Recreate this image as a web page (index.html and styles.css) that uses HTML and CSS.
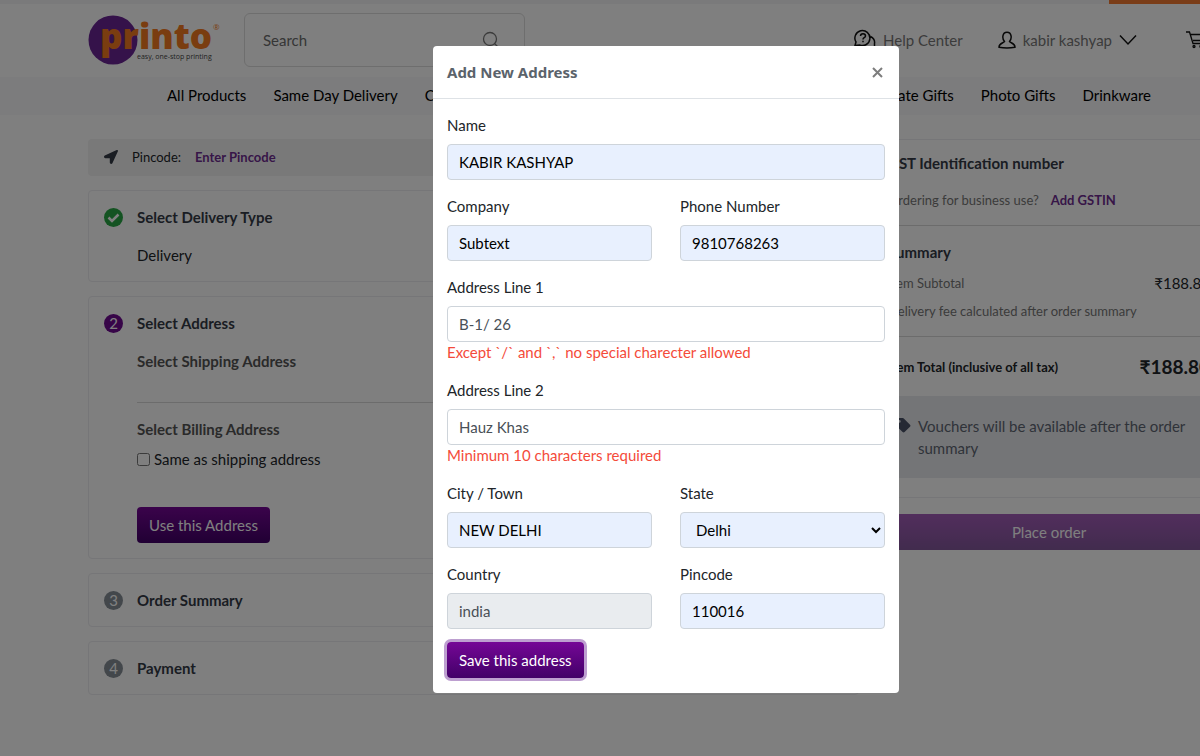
FILE: index.html
```html
<!DOCTYPE html>
<html lang="en">
<head>
  <meta charset="UTF-8" />
  <meta name="viewport" content="width=device-width, initial-scale=1.0"/>
  <title>Checkout - Printo</title>
  <link rel="stylesheet" href="styles.css">
</head>
<body>
<div class="page">
  <div class="top-strip"><span class="top-strip-promo"></span></div>

  <header class="header">
    <a class="logo" href="#" aria-label="Printo">
      <svg width="132" height="50" viewBox="0 0 132 50">
        <circle cx="25" cy="25" r="24.500" fill="#6a2595"/>
        <text class="logo-name" x="12" y="34">printo</text>
        <text class="logo-mark" x="125" y="15">®</text>
        <text class="logo-tag" x="49" y="44">easy, one-stop printing</text>
      </svg>
    </a>
    <form class="search">
      <input type="text" placeholder="Search" aria-label="Search" />
      <button type="button" aria-label="Search">
        <svg width="18" height="18" viewBox="0 0 18 18" fill="none" stroke="#777" stroke-width="1.300"><circle cx="8" cy="8" r="6.500"/><path d="M12.500 12.500l5 5"/></svg>
      </button>
    </form>
    <div class="header-actions">
      <a class="header-link" href="#">
        <svg width="22" height="22" viewBox="0 0 22 22" fill="none" stroke="#111" stroke-width="1.500"><path d="M1 16.500l1-3.500a7.500 7.500 0 1 1 3.500 3l-4.500.500zM16.500 7.500c3 1.500 4.500 4 4 7v4.500H15c-3 0-5-1.500-6-2.500"/><path d="M6.500 7c0-3 5-3 5 0 0 1.700-2.500 1.700-2.500 3.400M9 11.800v1.500"/></svg>
        <span>Help Center</span>
      </a>
      <a class="header-link header-user" href="#">
        <svg width="18" height="18" viewBox="0 0 18 18" fill="none" stroke="#111" stroke-width="1.500"><path d="M6.500 10.500C4 8 4 1.300 9 1.300s5 6.700 2.500 9.200c.5 1.500 5.500 1.500 5.500 5.700-4 .800-12 .800-16 0 0-4.200 5-4.200 5.500-5.700z"/></svg>
        <span>kabir kashyap</span>
        <svg width="18" height="12" viewBox="0 0 18 12" fill="none" stroke="#111" stroke-width="1.500"><path d="M1 1.500l8 8.500 8-8.500"/></svg>
      </a>
      <a class="cart" href="#" aria-label="Cart">
        <svg width="22" height="18" viewBox="0 0 22 18" fill="none" stroke="#111" stroke-width="1.300"><path d="M0 1h3.500l3.500 11.500h11.500L21 3.500H4.500M7 9.500h12"/><circle cx="8" cy="15.500" r="1"/><circle cx="15" cy="15.500" r="1"/></svg>
      </a>
    </div>
  </header>

  <nav class="nav">
    <a href="#">All Products</a>
    <a href="#">Same Day Delivery</a>
    <a href="#">Clothing</a>
    <a href="#" class="nav-end">Corporate Gifts</a>
    <a href="#">Photo Gifts</a>
    <a href="#">Drinkware</a>
  </nav>

  <main class="checkout">
    <div class="steps">
      <div class="pincode-bar">
        <svg width="14" height="14" viewBox="0 0 14 14" fill="#343a46"><path d="M12.700.1L.8 5.600c-1.300.7-.9 2.600.6 2.600h4.400v4.400c0 1.500 2 1.900 2.600.6L13.900 1.300c.4-.8-.4-1.600-1.200-1.200z"/></svg>
        <span>Pincode:</span>
        <a href="#">Enter Pincode</a>
      </div>

      <section class="card step">
        <svg class="step-check" width="19" height="19" viewBox="0 0 19 19"><circle cx="9.500" cy="9.500" r="9.500" fill="#28a745"/><path d="M4.500 9.500l3.500 3.500 6.500-6.500" fill="none" stroke="#fff" stroke-width="2.500"/></svg>
        <div class="step-body">
          <h2>Select Delivery Type</h2>
          <p class="step-value">Delivery</p>
        </div>
      </section>

      <section class="card step step-address">
        <span class="step-number active">2</span>
        <div class="step-body">
          <h2>Select Address</h2>
          <h3>Select Shipping Address</h3>
          <hr>
          <h3>Select Billing Address</h3>
          <div class="same-address">
            <input type="checkbox" id="same-address" />
            <label for="same-address">Same as shipping address</label>
          </div>
          <button class="btn">Use this Address</button>
        </div>
      </section>

      <section class="card step">
        <span class="step-number">3</span>
        <h2>Order Summary</h2>
      </section>

      <section class="card step">
        <span class="step-number">4</span>
        <h2>Payment</h2>
      </section>
    </div>

    <aside class="side">
      <div class="card">
        <div class="side-block">
          <h2>GST Identification number</h2>
          <p class="gst-line"><span>Ordering for business use?</span><a href="#">Add GSTIN</a></p>
        </div>
        <div class="side-block">
          <h2>Summary</h2>
          <div class="side-row"><span>Item Subtotal</span><span class="price">₹188.80</span></div>
          <p class="side-note">Delivery fee calculated after order summary</p>
        </div>
        <div class="side-total"><span>Item Total (inclusive of all tax)</span><span class="total-price">₹188.80</span></div>
        <div class="voucher">
          <svg width="15" height="15" viewBox="0 0 15 15" fill="#4a5268"><path d="M0 1.400v5.500c0 .4.200.8.400 1l6.200 6.200c.6.600 1.500.6 2 0l5.400-5.400c.6-.6.600-1.500 0-2L7.800.500C7.500.200 7.200 0 6.800 0H1.400C.6 0 0 .6 0 1.400zM3.300 2a1.400 1.400 0 1 1 0 2.800 1.400 1.400 0 0 1 0-2.800z"/></svg>
          <p>Vouchers will be available after the order summary</p>
        </div>
      </div>
      <button class="btn place-order">Place order</button>
    </aside>
  </main>

  <div class="backdrop">
    <div class="modal" role="dialog" aria-labelledby="modal-title">
      <div class="modal-header">
        <h1 id="modal-title">Add New Address</h1>
        <button class="close" aria-label="Close">
          <svg width="11" height="11" viewBox="0 0 11 11" stroke="#7d7d7d" stroke-width="2"><path d="M1 1l9 9M10 1l-9 9"/></svg>
        </button>
      </div>
      <form class="modal-body">
        <div class="fields">
          <div class="field wide">
            <label for="name">Name</label>
            <input class="filled" type="text" id="name" value="KABIR KASHYAP" />
          </div>
          <div class="field">
            <label for="company">Company</label>
            <input class="filled" type="text" id="company" value="Subtext" />
          </div>
          <div class="field">
            <label for="phone">Phone Number</label>
            <input class="filled" type="tel" id="phone" value="9810768263" />
          </div>
          <div class="field wide">
            <label for="line1">Address Line 1</label>
            <input type="text" id="line1" value="B-1/ 26" />
            <p class="error">Except `/` and `,` no special charecter allowed</p>
          </div>
          <div class="field wide">
            <label for="line2">Address Line 2</label>
            <input type="text" id="line2" value="Hauz Khas" />
            <p class="error">Minimum 10 characters required</p>
          </div>
          <div class="field">
            <label for="city">City / Town</label>
            <input class="filled" type="text" id="city" value="NEW DELHI" />
          </div>
          <div class="field">
            <label for="state">State</label>
            <select class="filled" id="state"><option>Delhi</option></select>
          </div>
          <div class="field">
            <label for="country">Country</label>
            <input type="text" id="country" value="india" disabled />
          </div>
          <div class="field">
            <label for="pincode">Pincode</label>
            <input class="filled" type="text" id="pincode" value="110016" />
          </div>
        </div>
        <button type="button" class="btn btn-save">Save this address</button>
      </form>
    </div>
  </div>
</div>
</body>
</html>
```
FILE: styles.css
```css
* {
  box-sizing: border-box;
}

body {
  margin: 0;
  overflow: hidden;
  font-family: Lato, "Noto Sans", sans-serif;
  font-size: 15px;
  line-height: 22px;
  color: #212529;
  background: #fff;
}

h1, h2, h3, p {
  margin: 0;
}

a {
  color: inherit;
  text-decoration: none;
}

button, input, select {
  font-family: inherit;
  font-size: 15px;
}

svg {
  display: block;
  flex: none;
}

.page {
  position: relative;
  min-width: 1332px;
  min-height: 100vh;
}

/* header */
.top-strip {
  display: flex;
  justify-content: flex-end;
  height: 4px;
  background: #f4f4f6;
}

.top-strip-promo {
  width: 223px;
  background: #f47b30;
}

.header {
  display: flex;
  align-items: center;
  height: 73px;
  padding: 0 124px 2px 88px;
}

.logo-name {
  font: 800 35px "Open Sans", sans-serif;
  fill: #f47b20;
}

.logo-mark {
  font: 8px "Open Sans", sans-serif;
  fill: #f47b20;
}

.logo-tag {
  font: 7px "Open Sans", sans-serif;
  fill: #444;
}

.search {
  display: flex;
  align-items: center;
  width: 281px;
  height: 54px;
  margin-left: 24px;
  padding: 0 24px 0 18px;
  border: 1px solid #dcdcdc;
  border-radius: 6px;
}

.search input {
  flex: 1;
  min-width: 0;
  padding: 0;
  border: 0;
  outline: 0;
  background: none;
}

.search input::placeholder {
  color: #6c6c6c;
}

.search button, .close {
  padding: 0;
  border: 0;
  background: none;
  cursor: pointer;
}

.header-actions {
  display: flex;
  align-items: center;
  gap: 35px;
  margin-left: auto;
}

.header-link {
  display: flex;
  align-items: center;
  gap: 7px;
  color: #777;
}

.cart {
  margin-left: 14px;
}

.nav {
  display: flex;
  align-items: center;
  gap: 27px;
  height: 38px;
  padding: 0 181px 2px 167px;
  background: #f8f8fa;
  color: #000;
}

.nav-end {
  margin-left: auto;
}

/* checkout */
.checkout {
  display: grid;
  grid-template-columns: 1fr 352px;
  align-items: start;
  gap: 14px;
  padding: 24px 107px 24px 88px;
}

.steps {
  display: grid;
  gap: 14px;
}

.pincode-bar {
  display: flex;
  align-items: center;
  gap: 14px;
  height: 37px;
  padding: 0 16px 2px;
  border-radius: 4px;
  background: #f3f3f3;
  font-size: 13px;
}

.pincode-bar a, .gst-line a {
  color: #6f2c91;
  font-weight: 700;
}

.card {
  border: 1px solid #ececf0;
  border-radius: 4px;
}

h2, h3 {
  font-size: 15px;
  font-weight: 700;
  color: #343a46;
}

.step {
  display: flex;
  align-items: flex-start;
  gap: 14px;
  padding: 15px;
}

.step-body {
  flex: 1;
}

.step-check, .step-number {
  margin-top: 2px;
}

.step-number {
  flex: none;
  width: 19px;
  height: 19px;
  border-radius: 50%;
  background: #868e96;
  color: #fff;
  line-height: 19px;
  text-align: center;
}

.step-number.active {
  background: #6f0a91;
}

.step-value {
  margin-top: 16px;
}

.step-address h3 {
  margin-top: 16px;
  color: #555;
}

.step-address hr + h3 {
  margin-top: 15px;
}

hr {
  margin: 30px 0 0;
  border: 0;
  border-top: 1px solid #d8d8d8;
}

.same-address {
  display: flex;
  align-items: center;
  gap: 4px;
  margin-top: 8px;
}

.same-address input {
  width: 13px;
  height: 13px;
  margin: 0;
}

.btn {
  height: 36px;
  padding: 0 12px;
  border: 0;
  border-radius: 4px;
  background: linear-gradient(#750796, #420068);
  color: #fff;
  cursor: pointer;
}

.step-address .btn {
  display: block;
  margin-top: 37px;
}

.side .card {
  padding-bottom: 19px;
}

.side-block {
  padding: 12px 14px 14px;
  border-bottom: 1px solid #d8d8d8;
  color: #777;
  font-size: 13px;
}

.gst-line {
  display: flex;
  gap: 12px;
  margin-top: 15px;
}

.side-block + .side-block {
  padding-top: 15px;
}

.side-row {
  display: flex;
  justify-content: space-between;
  margin-top: 9px;
}

.price {
  color: #212529;
  font-size: 15px;
}

.side-note {
  margin-top: 6px;
}

.side-total {
  display: flex;
  align-items: center;
  justify-content: space-between;
  height: 59px;
  padding: 0 14px;
  color: #212529;
  font-size: 13px;
  font-weight: 700;
}

.total-price {
  font-size: 19px;
}

.voucher {
  display: flex;
  gap: 7px;
  padding: 19px 22px;
  background: #e9ebef;
  color: #5f6673;
}

.voucher svg {
  margin-top: 3px;
}

.place-order {
  width: 100%;
  margin-top: 16px;
  opacity: .65;
}

/* address dialog */
.backdrop {
  position: absolute;
  inset: 0;
  display: flex;
  align-items: flex-start;
  justify-content: center;
  padding-top: 46px;
  background: rgba(0, 0, 0, .5);
}

.modal {
  width: 466px;
  border-radius: 4px;
  background: #fff;
}

.modal-header {
  display: flex;
  align-items: center;
  justify-content: space-between;
  height: 53px;
  padding: 0 16px 0 14px;
  border-bottom: 1px solid #dee2e6;
}

.modal-header h1 {
  font: 700 15px/22px "Noto Sans", sans-serif;
  color: #5b636b;
}

.modal-body {
  padding: 16px 14px 15px;
}

.fields {
  display: grid;
  grid-template-columns: 1fr 1fr;
  gap: 16px 28px;
}

.field {
  display: grid;
}

.wide {
  grid-column: 1 / -1;
}

.field label {
  margin-bottom: 9px;
  line-height: 20px;
}

.field input, .field select {
  width: 100%;
  height: 36px;
  padding: 0 11px;
  border: 1px solid #ced4da;
  border-radius: 4px;
  background: #fff;
  color: #495057;
}

.field .filled {
  background: #e8f0fe;
  color: #000;
}

.field input:disabled {
  background: #e9ecef;
}

.error {
  margin-bottom: 2px;
  line-height: 20px;
  color: #f44b3a;
}

.btn-save {
  margin-top: 13px;
  box-shadow: 0 0 0 3px #bd9fd0;
}
```
